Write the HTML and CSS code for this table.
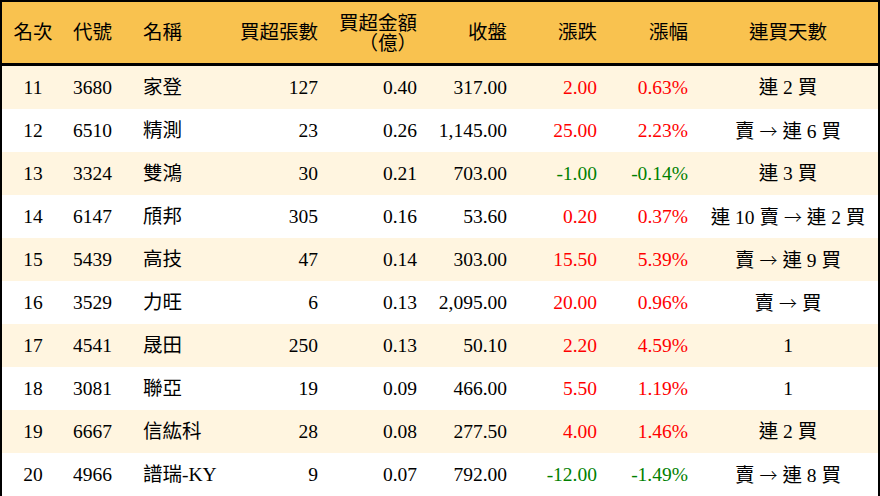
FILE: index.html
```html
<!DOCTYPE html>
<html lang="zh-Hant">
<head>
<meta charset="utf-8">
<title>買超排行</title>
<link rel="stylesheet" href="styles.css">
</head>
<body>
<table class="rank">
  <colgroup>
    <col class="c1"><col class="c2"><col class="c3"><col class="c4"><col class="c5"><col class="c6"><col class="c7"><col class="c8"><col class="c9">
  </colgroup>
  <thead>
    <tr>
      <th class="ctr">名次</th>
      <th class="lft">代號</th>
      <th class="lft">名稱</th>
      <th class="rgt">買超張數</th>
      <th class="rgt two">買超金額<br>（億）</th>
      <th class="rgt">收盤</th>
      <th class="rgt">漲跌</th>
      <th class="rgt">漲幅</th>
      <th class="ctr">連買天數</th>
    </tr>
  </thead>
  <tbody>
    <tr class="odd"><td class="ctr">11</td><td class="lft">3680</td><td class="lft">家登</td><td class="rgt">127</td><td class="rgt">0.40</td><td class="rgt">317.00</td><td class="rgt up">2.00</td><td class="rgt up">0.63%</td><td class="ctr">連 2 買</td></tr>
    <tr><td class="ctr">12</td><td class="lft">6510</td><td class="lft">精測</td><td class="rgt">23</td><td class="rgt">0.26</td><td class="rgt">1,145.00</td><td class="rgt up">25.00</td><td class="rgt up">2.23%</td><td class="ctr">賣 <span class="arrow">→</span> 連 6 買</td></tr>
    <tr class="odd"><td class="ctr">13</td><td class="lft">3324</td><td class="lft">雙鴻</td><td class="rgt">30</td><td class="rgt">0.21</td><td class="rgt">703.00</td><td class="rgt down">-1.00</td><td class="rgt down">-0.14%</td><td class="ctr">連 3 買</td></tr>
    <tr><td class="ctr">14</td><td class="lft">6147</td><td class="lft">頎邦</td><td class="rgt">305</td><td class="rgt">0.16</td><td class="rgt">53.60</td><td class="rgt up">0.20</td><td class="rgt up">0.37%</td><td class="ctr">連 10 賣 <span class="arrow">→</span> 連 2 買</td></tr>
    <tr class="odd"><td class="ctr">15</td><td class="lft">5439</td><td class="lft">高技</td><td class="rgt">47</td><td class="rgt">0.14</td><td class="rgt">303.00</td><td class="rgt up">15.50</td><td class="rgt up">5.39%</td><td class="ctr">賣 <span class="arrow">→</span> 連 9 買</td></tr>
    <tr><td class="ctr">16</td><td class="lft">3529</td><td class="lft">力旺</td><td class="rgt">6</td><td class="rgt">0.13</td><td class="rgt">2,095.00</td><td class="rgt up">20.00</td><td class="rgt up">0.96%</td><td class="ctr">賣 <span class="arrow">→</span> 買</td></tr>
    <tr class="odd"><td class="ctr">17</td><td class="lft">4541</td><td class="lft">晟田</td><td class="rgt">250</td><td class="rgt">0.13</td><td class="rgt">50.10</td><td class="rgt up">2.20</td><td class="rgt up">4.59%</td><td class="ctr">1</td></tr>
    <tr><td class="ctr">18</td><td class="lft">3081</td><td class="lft">聯亞</td><td class="rgt">19</td><td class="rgt">0.09</td><td class="rgt">466.00</td><td class="rgt up">5.50</td><td class="rgt up">1.19%</td><td class="ctr">1</td></tr>
    <tr class="odd"><td class="ctr">19</td><td class="lft">6667</td><td class="lft">信紘科</td><td class="rgt">28</td><td class="rgt">0.08</td><td class="rgt">277.50</td><td class="rgt up">4.00</td><td class="rgt up">1.46%</td><td class="ctr">連 2 買</td></tr>
    <tr><td class="ctr">20</td><td class="lft">4966</td><td class="lft">譜瑞-KY</td><td class="rgt">9</td><td class="rgt">0.07</td><td class="rgt">792.00</td><td class="rgt down">-12.00</td><td class="rgt down">-1.49%</td><td class="ctr">賣 <span class="arrow">→</span> 連 8 買</td></tr>
  </tbody>
</table>
</body>
</html>
```

FILE: styles.css
```css
html, body {
  margin: 0;
  padding: 0;
  background: #ffffff;
}

.rank {
  width: 880px;
  height: 496px;
  border-collapse: separate;
  border-spacing: 0;
  table-layout: fixed;
  border: 2px solid #000000;
  box-sizing: border-box;
  font-family: "Liberation Serif", "Noto Sans CJK TC", serif;
  font-size: 19.5px;
  color: #000000;
}

.c1 { width: 62px; }
.c2 { width: 70px; }
.c3 { width: 94px; }
.c4 { width: 100px; }
.c5 { width: 99px; }
.c6 { width: 90px; }
.c7 { width: 90px; }
.c8 { width: 91px; }
.c9 { width: 180px; }

.rank th {
  height: 59px;
  background: #f9c24f;
  font-weight: normal;
  border-bottom: 3px solid #000000;
  padding: 0;
  line-height: 20px;
  vertical-align: middle;
}

.rank th.two {
  padding-top: 2px;
}

.rank td {
  height: 43px;
  padding: 0;
  line-height: 20px;
  vertical-align: middle;
  white-space: nowrap;
}

.rank tbody tr {
  background: #ffffff;
}

.rank tbody tr.odd {
  background: #fff5e0;
}

.ctr { text-align: center; }
.lft { text-align: left; padding-left: 9px !important; }
.rgt { text-align: right; padding-right: 10px !important; }

.arrow {
  font-family: "Noto Sans CJK TC", sans-serif;
  font-weight: 300;
  font-size: 18px;
}

.up { color: #ff0000; }
.down { color: #008000; }
```
